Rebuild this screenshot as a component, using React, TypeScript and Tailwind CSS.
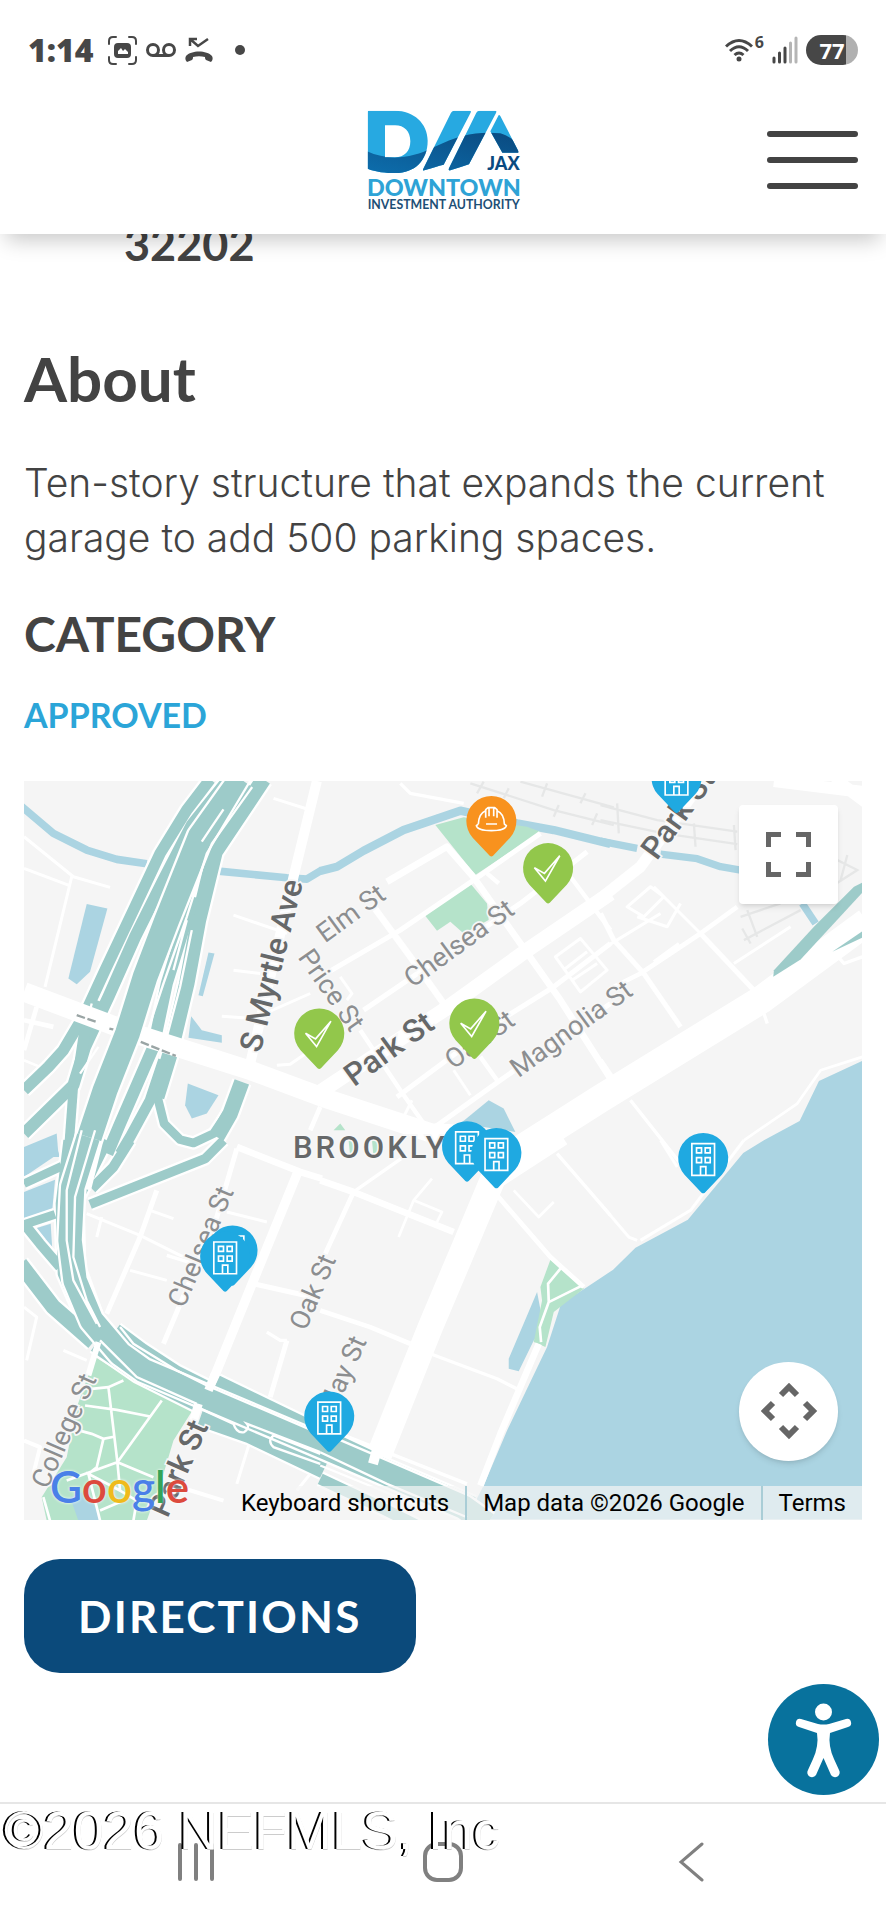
import React from "react";

type TPin = {
  x: number;
  y: number;
  kind: "building" | "check" | "helmet";
};

type TLabel = {
  x: number;
  y: number;
  angle: number;
  text: string;
  major?: boolean;
  anchor?: "start" | "middle" | "end";
};

type TRoad = [d: string, width: number];

// The map is drawn in six tiles, each one with its own origin
const TILES = {
  a: "translate(-12 -33)",
  b: "translate(888 -33)",
  c: "translate(1728 -33)",
  d: "translate(-12 1077)",
  e: "translate(888 1077)",
  f: "translate(1728 1077)",
};

type TTile = keyof typeof TILES;

const pins: TPin[] = [
  { x: 1956, y: -10, kind: "building" },
  { x: 1401, y: 120, kind: "helmet" },
  { x: 1571, y: 261, kind: "check" },
  { x: 1350, y: 727, kind: "check" },
  { x: 885, y: 757, kind: "check" },
  { x: 1328, y: 1095, kind: "building" },
  { x: 1416, y: 1115, kind: "building" },
  { x: 2036, y: 1130, kind: "building" },
  { x: 625, y: 1407, kind: "building" },
  { x: 603, y: 1425, kind: "building" },
  { x: 915, y: 1905, kind: "building" },
];

const labels: TLabel[] = [
  { x: 980, y: 397, angle: -36, text: "Elm St" },
  { x: 1304, y: 487, angle: -36, text: "Chelsea St" },
  { x: 1640, y: 743, angle: -36, text: "Magnolia St" },
  { x: 1366, y: 775, angle: -36, text: "Oak St" },
  { x: 921, y: 627, angle: 55, text: "Price St" },
  { x: 530, y: 1396, angle: -67, text: "Chelsea St" },
  { x: 866, y: 1532, angle: -67, text: "Oak St" },
  { x: 1004, y: 1668, angle: -66, text: "May St", anchor: "end" },
  { x: 120, y: 1948, angle: -66, text: "College St" },
  { x: 1094, y: 803, angle: -36, text: "Park St", major: true },
  { x: 742, y: 553, angle: -76, text: "S Myrtle Ave", major: true },
  { x: 1871, y: 222, angle: -54, text: "Park St", major: true, anchor: "start" },
  { x: 463, y: 2060, angle: -66, text: "Park St", major: true },
];

const streets: Record<TTile, TRoad[]> = {
  a: [
    ["M890 33L820 320L690 880", 30],
    ["M12 200L160 320L270 352M12 295L145 345M155 320L75 650", 9],
    ["M760 85L870 120M640 435L800 490M640 600L720 610M605 738L700 745L870 670M770 885L810 882L900 820", 9],
    ["M50 710L12 840M12 750L100 770M900 1010L870 1080", 14],
    ["M12 870L60 890", 8],
  ],
  b: [
    ["M240 40L270 70L430 100", 10],
    ["M0 620L240 480L460 330L660 190M130 720L600 400L800 245", 15],
    ["M200 335L380 230L460 322L600 520L720 690L870 925", 20],
    ["M160 410L270 560L370 700", 20],
    ["M0 965L370 720L620 540L870 370", 44],
    ["M230 980L540 750L700 650L870 520M330 1080L540 930L870 700", 15],
    ["M120 780L240 960L310 1060M480 860L530 930M750 320L870 480M500 310L535 340", 13],
    ["M400 900L450 975M60 620L95 670L80 690M250 1040L275 990", 9],
    ["M705 560L780 505L860 600L780 665ZM735 595L800 545M755 630L830 580", 9],
  ],
  c: [
    ["M0 385L120 290L300 40", 34],
    ["M30 655L120 610L300 490L410 410", 14],
    ["M0 430L40 510L130 610L240 770M300 490L460 660M0 870L60 960", 15],
    ["M400 580L570 470M0 540L180 430M160 350L300 490M80 410L150 350L190 380L130 440ZM110 440L200 470L240 400M160 575L235 520", 9],
    ["M520 33L900 80M700 25L800 100", 36],
    ["M-260 1150L0 985L480 690L800 455", 84],
    ["M90 990L240 1180M480 700L500 760M700 545L730 580L785 560", 10],
    ["M785 860L660 900L590 1000L430 1110", 8],
  ],
  d: [
    ["M650 25L590 230L430 610M750 770L800 600", 15],
    ["M650 20L840 95L905 115", 20],
    ["M835 90L700 420L570 740", 28],
    ["M410 150L360 290L260 520M700 430L900 475", 15],
    ["M200 220L360 285L480 345L560 370M230 290L245 230M330 390L440 420M390 210L460 235M620 215L740 245", 9],
    ["M12 500L50 530L20 660M130 630L200 660M690 900L650 1030M870 1000L830 1050", 9],
    ["M740 575L780 600L800 600M440 345L520 370", 10],
    ["M12 900L60 920L40 1000M480 1040L610 1080", 12],
  ],
  e: [
    ["M720 -20L520 110L440 300L330 560L170 960", 76],
    ["M0 120L100 155L400 275", 20],
    ["M100 155L15 340M0 510L150 560L270 610M530 165L690 350L790 440", 14],
    ["M100 155L250 50M330 640L530 715L600 750M710 40L870 225", 10],
    ["M335 115L280 180L235 290M280 180L365 215L350 245M580 150L655 230L700 185", 8],
    ["M655 610L540 880L480 1035", 20],
    ["M60 880L440 1030", 10],
  ],
  f: [["M0 190L85 290L110 300M180 0L230 80M430 0L270 210L120 300", 9]],
};

const highways: Record<"a" | "d" | "e", TRoad[]> = {
  a: [
    ["M570 28L500 120L420 250L340 420L255 600L195 730L130 840L85 890L12 960", 34],
    ["M625 28L515 165L430 330L345 500L265 680L195 830L160 945L12 1090", 36],
    ["M230 690L195 780L180 880", 34],
    ["M730 28L585 245L535 450L500 640L450 850L410 980", 46],
    ["M520 380L440 640L400 830L300 1060L262 1150", 36],
    ["M430 900L412 980L432 1060L480 1108L520 1118L580 1090L620 1030", 26],
    ["M665 935L630 1030L590 1100", 46],
    ["M160 950L145 1150", 28],
    ["M430 870L390 990L330 1100L300 1150", 32],
  ],
  d: [
    ["M610 0L555 55L210 192", 28],
    ["M12 130L125 78M12 253L105 222", 26],
    ["M12 250L60 310L120 380", 30],
    ["M330 0L280 80L215 145", 30],
    ["M145 0L122 190L128 400L180 520L250 610", 30],
    ["M260 0L170 180L175 380L230 530L300 620", 34],
    ["M0 370L100 500L220 605", 46],
    ["M220 620L350 710L530 800", 26],
    ["M290 565L370 625L470 690L570 740", 30],
    ["M590 725L900 875", 42],
    ["M540 832L690 885L910 990", 48],
  ],
  e: [
    ["M0 875L150 945M180 965L460 1085", 32],
    ["M0 1015L160 1090L300 1160", 34],
  ],
};

const BuildingGlyph = () => (
  <g fill="none" stroke="#fff" strokeWidth="5">
    <path d="M-34 -43H34V52H-34Z" />
    <path d="M-20 -30H-5V-15H-20ZM6 -30H21V-15H6ZM-20 -1H-5V14H-20ZM6 -1H21V14H6Z" />
    <path d="M-8 52V26H8V52" />
  </g>
);

const CheckGlyph = () => (
  <path
    d="M-41 -1L-11 16L35 -37L-8 39Z"
    fill="none"
    stroke="#fff"
    strokeWidth="5"
  />
);

const HelmetGlyph = () => (
  <g fill="none" stroke="#fff" strokeWidth="5" strokeLinejoin="round">
    <path d="M-39 9C-38 -14 -30 -26 -17 -31M17 -31C30 -26 38 -14 39 9L45 14C43 24 22 29 0 29C-22 29 -43 24 -45 14L-39 9" />
    <path d="M-17 -10V-34L-10 -40H10L17 -34V-10M-7 -38V-14M7 -38V-14M-16 9H17" />
  </g>
);

const Pin = ({ x, y, kind }: TPin) => {
  const fill =
    kind === "building" ? "#1fa9e1" : kind === "check" ? "#92c74b" : "#f8921e";
  return (
    <g transform={`translate(${x} ${y})`}>
      <path d="M-56 50A75 75 0 1 1 56 50L5 104Q0 108 -5 104Z" fill={fill} />
      {kind === "building" && <BuildingGlyph />}
      {kind === "check" && <CheckGlyph />}
      {kind === "helmet" && <HelmetGlyph />}
    </g>
  );
};

const Road = ({ road, color }: { road: TRoad; color: string }) => (
  <path
    d={road[0]}
    fill="none"
    stroke={color}
    strokeWidth={road[1]}
    strokeLinejoin="round"
  />
);

const MapCanvas = () => {
  return (
    <svg
      viewBox="0 0 2512 2214"
      className="block w-full bg-[#f5f5f5] font-['Roboto',sans-serif]"
      role="img"
      aria-label="Map of Brooklyn, Jacksonville"
    >
      {/* railway */}
      <g fill="none" stroke="#e6e7e7" strokeWidth="7">
        <path
          transform={TILES.b}
          d="M450 40L700 120L880 165M600 35L880 112M470 70L490 35M550 85L565 55M665 80L680 40M700 140L715 105M780 100L795 70M815 165L830 130"
        />
        <path
          transform={TILES.c}
          d="M0 105L170 150L410 185M0 150L190 190L410 222M50 100L55 190M280 160L285 230M400 165L405 240M700 265L770 300L700 345M740 255L720 330M420 440L540 400M430 510L600 420M425 475L450 520M440 420L470 500"
        />
      </g>

      {/* river, canal and ponds */}
      <g fill="#abd4e2">
        <path d="M2513 839L2383 899L2325 1019L2218 1077L2156 1115L1990 1315L1833 1399L1766 1465L1688 1517L1610 1567L1568 1697L1448 1947L1378 2112L1325 2214H2513Z" />
        <g transform={TILES.a}>
          <path d="M200 402L262 415L210 605L170 642L145 625Z" />
          <path d="M565 547L583 550L548 678L535 675Z" />
          <path d="M513 738L545 780L605 795V818L505 803Z" />
          <path d="M503 940L595 975L560 1030L515 1045L495 1005Z" />
          <path d="M100 1100L12 1160H120Z" />
        </g>
        <path transform={TILES.b} d="M505 990L550 1015L585 1085L420 1060Z" />
        <g transform={TILES.d}>
          <path d="M12 20L110 -20L115 40L12 110Z" />
          <path d="M12 155L105 118L97 205L12 238Z" />
          <path d="M38 267L92 250L97 330Z" />
        </g>
        <path
          transform={TILES.e}
          d="M650 455L670 560L640 600L595 692L565 685V655Z"
        />
      </g>
      <g fill="none" stroke="#abd4e2" strokeLinejoin="round">
        <path
          transform={TILES.a}
          strokeWidth="23"
          d="M0 105L100 190L200 240L290 268L380 281M412 285H432M595 303L800 323L860 327L905 300"
        />
        <path
          transform={TILES.b}
          strokeWidth="25"
          d="M0 303L50 290L130 242L250 180L420 122L590 160L700 180L870 222"
        />
        <path
          transform={TILES.c}
          strokeWidth="22"
          d="M0 213L110 235M180 252L290 266L360 290L420 300M605 400L645 460"
        />
      </g>

      {/* parks */}
      <g fill="#b5e3ca">
        <path
          transform={TILES.b}
          d="M345 165L430 142L620 170L660 185L465 315ZM313 435L450 340L500 400L505 450L430 490L390 455L350 482Z"
        />
        <path
          transform={TILES.d}
          d="M225 650L370 740L520 805L460 900L430 1000L380 1140H80L65 1070L140 950L170 800Z"
        />
        <path
          transform={TILES.e}
          d="M690 358L780 430L790 445L700 515L675 620L640 605L665 480L660 440Z"
        />
        <path
          transform={TILES.e}
          d="M40 -30L60 -50L75 -30ZM85 0H110L105 50H90ZM155 0H180L175 50H160Z"
        />
      </g>
      <path
        transform={TILES.d}
        d="M150 1070L200 1050L245 1140H175Z"
        fill="#abd4e2"
      />
      <g fill="none" stroke="#fff" strokeWidth="8">
        <path
          transform={TILES.d}
          d="M215 745L265 740L310 720M265 740L292 965L425 780M195 795L290 808L390 828M160 865L215 880L250 895L285 888M250 895L230 980L205 1000M140 1020L292 965L400 1010M292 965L300 1050L205 1000L240 1140M300 1050L350 1080L340 1140M70 1070L90 1140M240 1110L310 1080"
        />
        <path
          transform={TILES.e}
          d="M720 385L683 430L685 485L658 560L662 605M685 485L780 438"
        />
      </g>

      {/* streets */}
      {(Object.keys(streets) as TTile[]).map((tile) => (
        <g key={tile} transform={TILES[tile]}>
          {streets[tile].map((road) => (
            <Road key={road[0]} road={road} color="#fff" />
          ))}
        </g>
      ))}

      {/* highways, white casing first */}
      {(["a", "d", "e"] as const).map((tile) => (
        <g key={tile} transform={TILES[tile]}>
          {highways[tile].map((road) => (
            <Road key={road[0]} road={[road[0], road[1] + 14]} color="#fff" />
          ))}
        </g>
      ))}
      {(["a", "d", "e"] as const).map((tile) => (
        <g key={tile} transform={TILES[tile]}>
          {highways[tile].map((road) => (
            <Road key={road[0]} road={road} color="#9dcbc9" />
          ))}
        </g>
      ))}
      <g transform={TILES.c} fill="#9dcbc9">
        <path d="M790 335L760 350L640 470L520 600L518 620L600 568L790 362Z" />
        <path d="M695 545L790 480V500Z" />
      </g>

      {/* Forest St bridge and the expressway that passes above it */}
      <path
        d="M0 632L340 760L680 868L900 950L1220 1055L1330 1060"
        fill="none"
        stroke="#fff"
        strokeWidth="58"
      />
      <path
        transform={TILES.a}
        d="M170 735L228 755M268 775L288 780M362 815L467 857"
        stroke="#9aa5a5"
        strokeWidth="7"
        strokeDasharray="26 8"
      />
      <g fill="none" strokeLinejoin="round">
        <path
          transform={TILES.a}
          d="M663 28L540 200L440 450L375 620L322 790L255 960L205 1110L170 1250"
          stroke="#fff"
          strokeWidth="88"
        />
        <path
          transform={TILES.a}
          d="M663 28L540 200L440 450L375 620L322 790L255 960L205 1110"
          stroke="#9dcbc9"
          strokeWidth="74"
        />
        <path
          transform={TILES.d}
          d="M205 -10L158 140L150 300L165 420L215 540L300 640L370 690L570 775L900 915L1330 1100L1400 1150"
          stroke="#fff"
          strokeWidth="84"
        />
        <path
          transform={TILES.d}
          d="M205 -10L158 140L150 300L165 420L215 540L300 640L370 690L570 775L900 915L1330 1100L1400 1150"
          stroke="#9dcbc9"
          strokeWidth="70"
        />
      </g>
      <g fill="none" stroke="#fff" strokeWidth="7">
        <path
          transform={TILES.a}
          d="M610 118L575 170L545 215M690 33L560 250L500 440L430 640L380 790M500 450L460 600M515 480L480 650L440 800M215 700L210 720M235 830L180 910"
        />
        <path
          transform={TILES.d}
          d="M185 -30L140 150L140 300L160 420L230 550M225 -30L165 170L160 350L200 480L240 560M240 600L350 710L530 790M300 560L340 610L470 690L560 735L900 880"
        />
        <path
          transform={TILES.d}
          d="M530 800L640 850Q650 880 672 875Q690 862 680 850L900 935M760 885Q740 900 760 920L900 970M760 885L900 940"
        />
        <path
          transform={TILES.e}
          d="M0 935L200 1030L440 1130M0 975L160 1040L330 1110"
        />
      </g>
      <g fill="none" stroke="#fff">
        <path transform={TILES.d} d="M585 700L565 750M535 790L520 840" strokeWidth="26" />
        <path transform={TILES.d} d="M235 605L205 705" strokeWidth="18" />
        <path transform={TILES.e} d="M175 910L158 970" strokeWidth="30" />
      </g>

      {/* street names */}
      {labels.map(({ x, y, angle, text, major, anchor = "middle" }) => (
        <text
          key={`${text}-${x}`}
          transform={`translate(${x} ${y}) rotate(${angle})`}
          textAnchor={anchor}
          dominantBaseline="central"
          fontSize={major ? 94 : 81}
          fontWeight={major ? 500 : 400}
          fill={major ? "#666869" : "#8c8e90"}
          stroke="#f7f7f7"
          strokeWidth="10"
          paintOrder="stroke"
        >
          {text}
        </text>
      ))}
      <text
        x="806"
        y="1129"
        fontSize="93"
        fontWeight="500"
        fill="#666869"
        stroke="#f7f7f7"
        strokeWidth="10"
        paintOrder="stroke"
        className="tracking-widest"
      >
        BROOKLYN
      </text>

      {pins.map((pin) => (
        <Pin key={`${pin.x}-${pin.y}`} {...pin} />
      ))}
    </svg>
  );
};

const GoogleMap = () => {
  return (
    <section className="relative overflow-hidden font-['Roboto',sans-serif]">
      <MapCanvas />
      <button
        type="button"
        aria-label="Toggle fullscreen view"
        className="absolute top-6 right-6 flex size-[99px] items-center justify-center rounded bg-white shadow-md"
      >
        <svg viewBox="0 0 45 45" className="size-[45px]" fill="none" stroke="#666" strokeWidth="5">
          <path d="M2.5 15V2.5H15M30 2.5H42.5V15M42.5 30V42.5H30M15 42.5H2.5V30" />
        </svg>
      </button>
      <button
        type="button"
        aria-label="Map camera controls"
        className="absolute right-6 bottom-[59px] flex size-[99px] items-center justify-center rounded-full bg-white shadow-md"
      >
        <svg viewBox="0 0 58 58" className="size-[58px]" fill="none" stroke="#666" strokeWidth="6">
          <path d="M21 13L29 5L37 13M21 45L29 53L37 45M13 21L5 29L13 37M45 21L53 29L45 37" />
        </svg>
      </button>
      <a
        href="#google"
        aria-label="Open this area in Google Maps"
        className="absolute bottom-1.5 left-[26px] font-['Lato',sans-serif] text-[44px] leading-[56px] font-semibold [text-shadow:0_0_3px_#fff]"
      >
        <span className="text-[#4a80e8]">G</span>
        <span className="text-[#dc4a3d]">o</span>
        <span className="text-[#efbb1c]">o</span>
        <span className="text-[#4a80e8]">g</span>
        <span className="text-[#35a457]">l</span>
        <span className="text-[#dc4a3d]">e</span>
      </a>
      <div className="absolute right-0 bottom-0 flex h-[34px] items-center divide-x-2 divide-[#a9cdd6] text-2xl text-black">
        <button type="button" className="h-full bg-[#f5f5f5]/70 px-4 leading-[34px]">
          Keyboard shortcuts
        </button>
        <span className="h-full bg-[#f5f5f5]/70 px-4 leading-[34px]">
          Map data ©2026 Google
        </span>
        <a href="#terms" className="h-full bg-[#f5f5f5]/70 px-4 leading-[34px]">
          Terms
        </a>
      </div>
    </section>
  );
};

const StatusBar = () => {
  return (
    <div className="flex h-[100px] items-center justify-between px-7 text-[#474747]">
      <div className="flex items-center">
        <span className="font-['Open_Sans',sans-serif] text-[32px] leading-10 font-extrabold">
          1:14
        </span>
        <svg viewBox="0 0 29 29" className="ml-3.5 size-[29px]" fill="none" stroke="currentColor" strokeWidth="2" strokeLinecap="round">
          <path d="M1 8V5Q1 1 5 1H8M21 1H24Q28 1 28 5V8M28 21V24Q28 28 24 28H21M8 28H5Q1 28 1 24V21" />
          <rect x="7" y="8" width="15" height="13" rx="3" fill="currentColor" />
          <path d="M10 18V15L13 12L15 15L17 13L20 16V18Z" fill="#fff" stroke="none" />
        </svg>
        <svg viewBox="0 0 32 16" className="ml-2 h-4 w-8" fill="none" stroke="currentColor" strokeWidth="3">
          <circle cx="8" cy="8" r="5.5" />
          <circle cx="24" cy="8" r="5.5" />
          <path d="M8 13.5H24" />
        </svg>
        <svg viewBox="0 0 28 26" className="ml-2 h-[26px] w-7" fill="none" stroke="currentColor" strokeWidth="2.5">
          <path d="M5 9V2H12M5 2L13 9L23 2" />
          <path
            d="M1 19C6 13 22 13 27 19C28 21 28 23 26 25L21 23C20 22 20 21 20 20C16 19 12 19 8 20C8 21 8 22 7 23L2 25C0 23 0 21 1 19Z"
            fill="currentColor"
            stroke="none"
          />
        </svg>
        <span className="ml-[22px] size-[10px] rounded-full bg-current" />
      </div>
      <div className="flex items-center">
        <svg viewBox="0 0 28 24" className="h-6 w-7" fill="none" stroke="currentColor" strokeWidth="3">
          <path d="M1 8.500Q14 -3.500 27 8.500M5 13Q14 4.500 23 13M9.500 17Q14 13 18.500 17" />
          <circle cx="14" cy="21" r="2.500" fill="currentColor" stroke="none" />
        </svg>
        <span className="mb-4 ml-0.5 font-['Open_Sans',sans-serif] text-base leading-4 font-bold">
          6
        </span>
        <svg viewBox="0 0 26 28" className="ml-2 h-7 w-[26px]" strokeWidth="3" strokeLinecap="round">
          <path d="M2 22V26M7.500 17V26M13 12V26" stroke="currentColor" />
          <path d="M18.500 7V26M24 2V26" stroke="#b5b5b5" />
        </svg>
        <span className="ml-2 flex h-[30px] w-[52px] items-center justify-center rounded-full bg-linear-to-r from-[#474747] from-77% to-[#b0b0b0] to-77% font-['Open_Sans',sans-serif] text-[22px] leading-[30px] font-bold text-white">
          77
        </span>
      </div>
    </div>
  );
};

const Logo = () => {
  return (
    <svg
      viewBox="0 0 456 300"
      className="w-[152px] overflow-visible font-['Lato',sans-serif]"
      role="img"
      aria-label="Downtown Investment Authority"
    >
      <defs>
        <linearGradient id="deep" x1="0" x2="1" y1="1" y2="0">
          <stop offset="0" stopColor="#0d6fae" />
          <stop offset="1" stopColor="#0a4a80" />
        </linearGradient>
        <clipPath id="mark">
          <path
            clipRule="evenodd"
            d="M6 2H84C140 2 182 40 182 92C182 152 142 189 86 189C56 189 26 186 2 176V6Q2 2 6 2ZM54 46V142H84C112 142 130 124 130 94C130 64 112 46 84 46Z"
          />
          <path d="M252 8Q256 2 262 2H308Q314 2 310 10L230 164Q206 170 172 181Q166 182 169 176Z" />
          <path d="M328 8Q331 2 338 2H384Q390 2 387 9L306 163Q280 172 250 181Q243 182 246 175Z" />
          <path d="M394 17Q396 13 400 18L454 123Q456 128 452 128H406L370 64Z" />
        </clipPath>
      </defs>
      <g clipPath="url(#mark)">
        <path d="M0 0H456V200H0Z" fill="#27a9e1" />
        <path
          d="M0 124C60 152 130 148 200 112C280 74 330 64 400 70C430 80 446 94 456 110V200H0Z"
          fill="url(#deep)"
        />
      </g>
      <g fontWeight="900">
        <text x="458" y="181" fontSize="54" textAnchor="end" fill="#0a4a80">
          JAX
        </text>
        <text x="0" y="257" fontSize="70" fill="#2ea3d6">
          DOWNTOWN
        </text>
      </g>
      <text x="2" y="296" fontSize="37" fontWeight="700" fill="#1d4f76">
        INVESTMENT AUTHORITY
      </text>
    </svg>
  );
};

const Header = () => {
  return (
    <header className="relative z-10 bg-white shadow-[0_12px_20px_-6px_rgba(0,0,0,0.22)]">
      <StatusBar />
      <div className="grid h-[134px] grid-cols-3 items-center px-7 pb-3.5">
        <a href="#home" className="col-start-2 justify-self-center">
          <Logo />
        </a>
        <button
          type="button"
          aria-label="Open menu"
          className="flex w-[91px] flex-col gap-5 justify-self-end"
        >
          <span className="h-1.5 rounded-full bg-[#434343]" />
          <span className="h-1.5 rounded-full bg-[#434343]" />
          <span className="h-1.5 rounded-full bg-[#434343]" />
        </button>
      </div>
    </header>
  );
};

const NavigationBar = () => {
  return (
    <nav className="relative border-t-2 border-[#e6e6e6] px-[72px]">
      <div className="grid h-[116px] grid-cols-3 items-center justify-items-center text-[#808080]">
        <button type="button" aria-label="Recent apps">
          <svg viewBox="0 0 40 40" className="size-10" stroke="currentColor" strokeWidth="4" strokeLinecap="round">
            <path d="M4 3V37M20 3V37M36 3V37" />
          </svg>
        </button>
        <button type="button" aria-label="Home">
          <svg viewBox="0 0 40 40" className="size-10" fill="none" stroke="currentColor" strokeWidth="4">
            <rect x="2" y="2" width="36" height="36" rx="12" />
          </svg>
        </button>
        <button type="button" aria-label="Back">
          <svg viewBox="0 0 40 40" className="size-10" fill="none" stroke="currentColor" strokeWidth="3" strokeLinecap="round">
            <path d="M32 2L11 20L32 38" />
          </svg>
        </button>
      </div>
      <p className="absolute -top-1 left-1 font-['Liberation_Sans',Arial,sans-serif] text-[54px] leading-[60px] whitespace-nowrap text-white [text-shadow:-2px_0_0_#000,0_1px_0_#ccc]">
        ©2026 NEFMLS, Inc
      </p>
    </nav>
  );
};

const App = () => {
  return (
    <div className="flex min-h-screen flex-col bg-white font-['Lato',sans-serif] text-[#434343]">
      <Header />
      <main className="relative flex grow flex-col px-6">
        <p className="-mt-5 ml-[100px] text-[45px] leading-[60px] font-bold">
          32202
        </p>
        <h1 className="mt-16 text-[62px] leading-[80px] font-bold">About</h1>
        <p className="mt-[37px] font-['Inter',sans-serif] text-[39px] leading-[55px] font-light">
          Ten-story structure that expands the current garage to add 500 parking
          spaces.
        </p>
        <h2 className="mt-[39px] text-[48px] leading-[60px] font-bold">
          CATEGORY
        </h2>
        <a
          href="#approved"
          className="mt-[26px] mb-[41px] self-start text-[34px] leading-[50px] font-bold text-[#2ba5d8]"
        >
          APPROVED
        </a>
        <GoogleMap />
        <a
          href="#directions"
          className="mt-[39px] self-start rounded-[36px] bg-[#0b4a7b] px-[54px] py-[27px] text-[44px] leading-[60px] font-bold tracking-wider text-white"
        >
          DIRECTIONS
        </a>
        <button
          type="button"
          aria-label="Accessibility menu"
          className="absolute right-[7px] bottom-[7px] size-[111px] rounded-full bg-[#08729d]"
        >
          <svg viewBox="0 0 111 111" className="size-full" fill="#fff">
            <circle cx="55.500" cy="28" r="8.500" />
            <path d="M33 35L50 40Q55.500 41 61 40L78 35A4 4 0 0 1 80 43L62 49Q60 62 66 75L71 86A4 4 0 0 1 63 91L55.500 74L48 91A4 4 0 0 1 40 86L45 75Q51 62 49 49L31 43A4 4 0 0 1 33 35Z" />
          </svg>
        </button>
      </main>
      <NavigationBar />
    </div>
  );
};

export default App;
